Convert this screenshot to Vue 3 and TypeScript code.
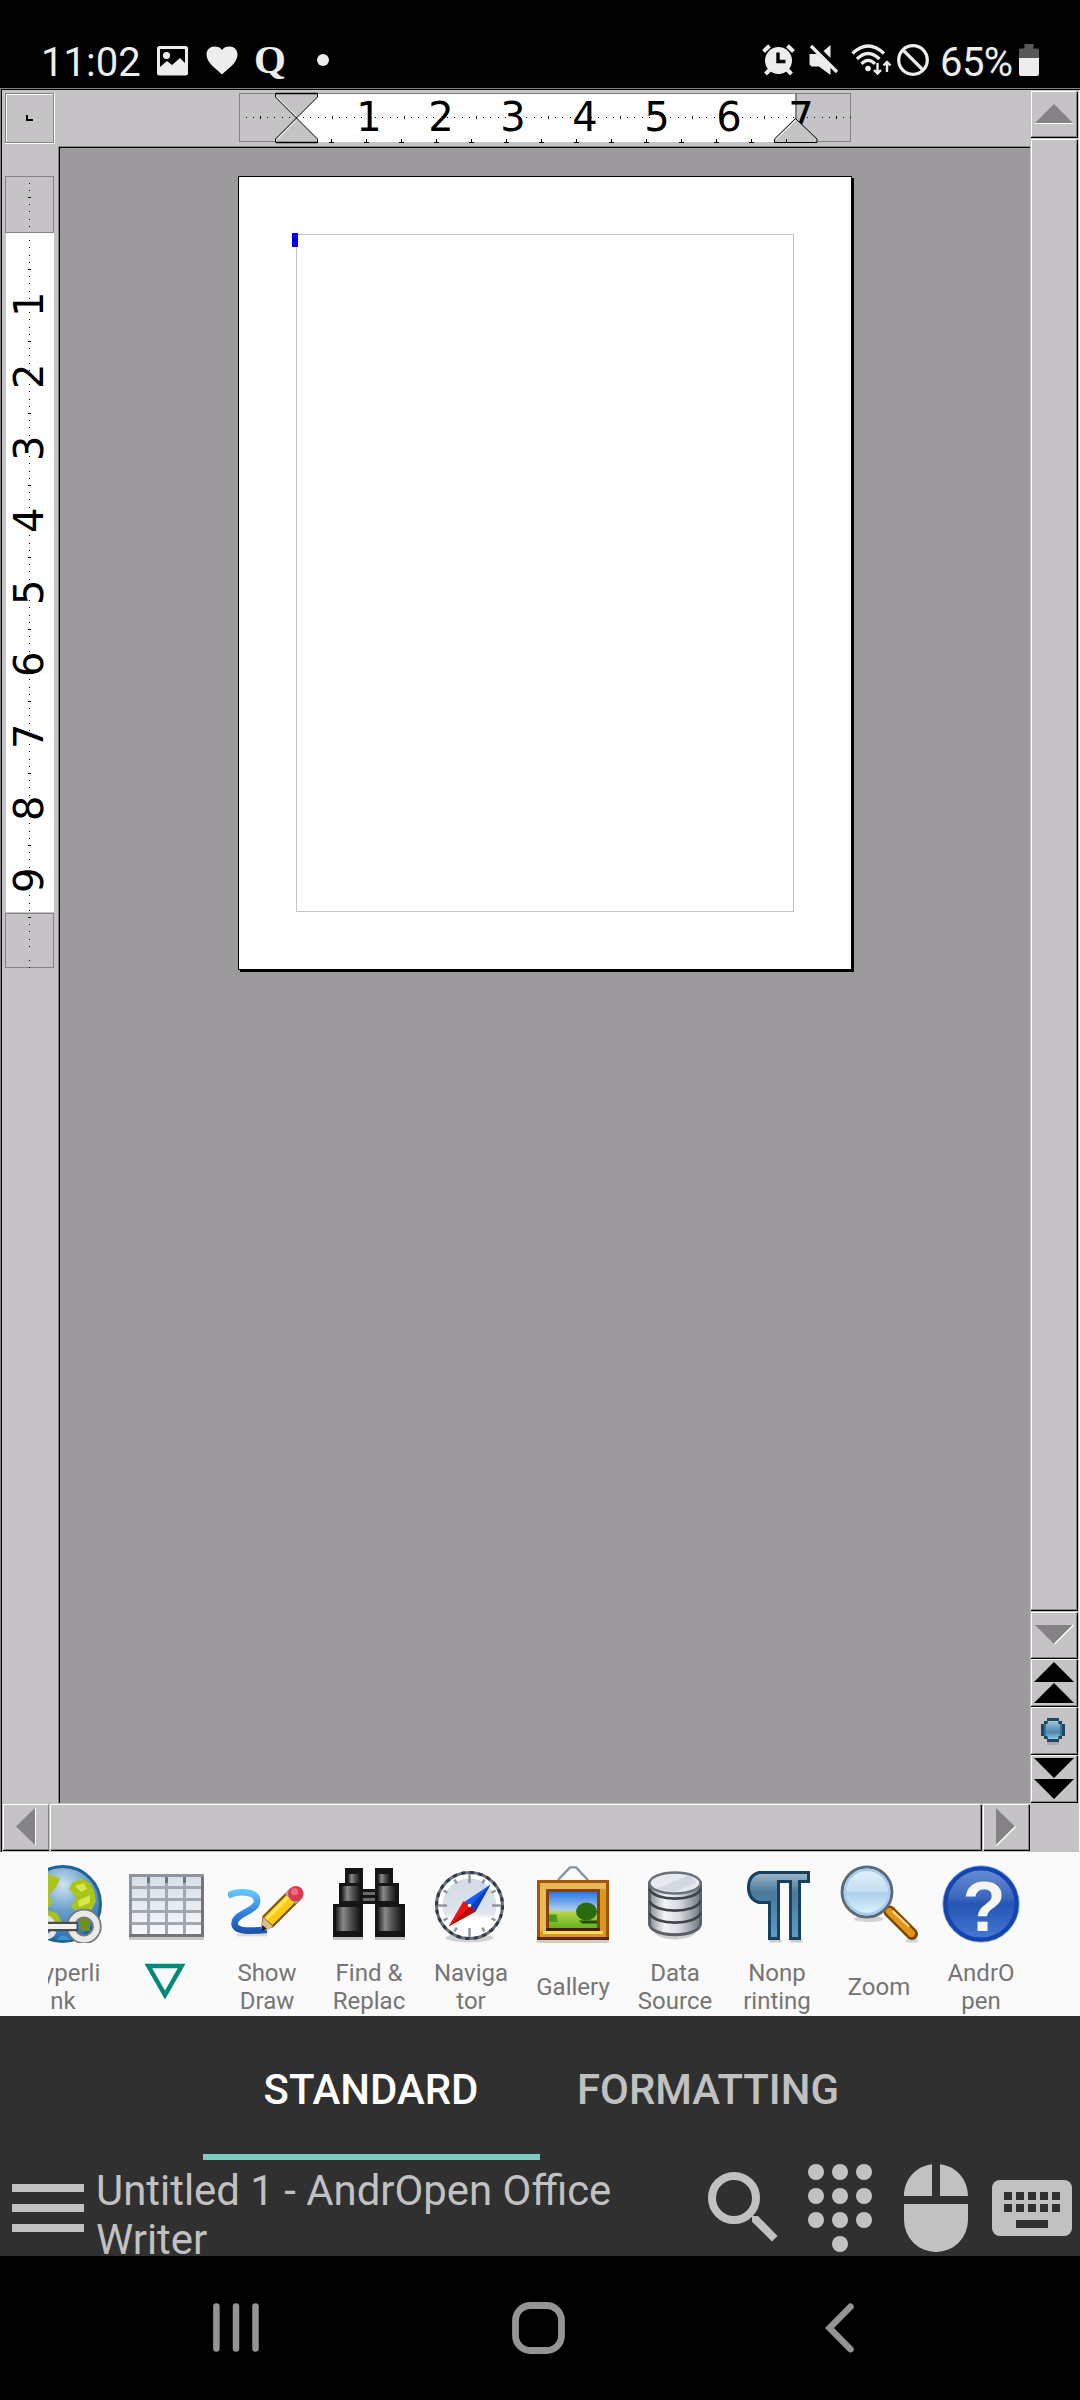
<script setup lang="ts">
interface Mark {
  pos: number
  major: boolean
}

const STEP = 7.2

// Ten divisions per inch: the half inch is a longer mark, the inch itself carries a number.
function marks(zero: number, from: number, to: number): Mark[] {
  const list: Mark[] = []
  for (let k = -7; k < 104; k++) {
    const pos = Math.round(zero + STEP * k)
    if (pos < from || pos > to || k % 10 === 0) continue
    list.push({ pos, major: Math.abs(k % 10) === 5 })
  }
  return list
}

const hMarks = marks(296, 245, 851)
const vMarks = marks(233, 180, 968)
const hNumbers = [1, 2, 3, 4, 5, 6, 7]
const vNumbers = [1, 2, 3, 4, 5, 6, 7, 8, 9]
const tabStops = Array.from({ length: 14 }, (_, i) => 331 + 35 * i)

interface Tool {
  id: string
  lines: string[]
}

const tools: Tool[] = [
  { id: 'link', lines: ['Hyperli', 'nk'] },
  { id: 'table', lines: [] },
  { id: 'draw', lines: ['Show', 'Draw'] },
  { id: 'find', lines: ['Find &', 'Replac'] },
  { id: 'navigator', lines: ['Naviga', 'tor'] },
  { id: 'gallery', lines: ['Gallery'] },
  { id: 'data', lines: ['Data', 'Source'] },
  { id: 'pilcrow', lines: ['Nonp', 'rinting'] },
  { id: 'zoom', lines: ['Zoom'] },
  { id: 'help', lines: ['AndrO', 'pen'] },
]

const compassTicks = Array.from({ length: 12 }, (_, i) => i * 30)
const keyCols = [12, 24, 36, 48, 60]
const padCols = [8, 32, 56]
</script>

<template>
  <div class="screen">
    <header class="status">
      <span class="clock">11:02</span>
      <svg class="s-image" width="31" height="30" viewBox="0 0 31 30">
        <path fill="#ededed" fill-rule="evenodd" d="M2.500 0H28.500A2.500 2.500 0 0 1 31 2.500V27A2.500 2.500 0 0 1 28.500 29.500H2.500A2.500 2.500 0 0 1 0 27V2.500A2.500 2.500 0 0 1 2.500 0ZM3 3V21L10 15L15 19L23 12L28 17V3Z" />
        <circle cx="9.500" cy="9.500" r="3.600" fill="#ededed" />
      </svg>
      <svg class="s-heart" width="32" height="29" viewBox="0 0 32 29">
        <path fill="#ededed" d="M16 28.500C10 22.500 0.500 17 0.500 8.500C0.500 3.500 4 0.500 8.500 0.500C12 0.500 14.500 1.500 16 4C17.500 1.500 20 0.500 23.500 0.500C28 0.500 31.500 3.500 31.500 8.500C31.500 17 22 22.500 16 28.500Z" />
      </svg>
      <span class="quora">Q</span>
      <i class="dot"></i>
      <div class="status-right">
        <svg width="33" height="32" viewBox="0 0 33 32">
          <path stroke="#ededed" stroke-width="4" d="M1.500 7.500L7.500 1.800M31.500 7.500L25.500 1.800M3.500 30L8 25.500M29.500 30L25 25.500" />
          <circle cx="16.500" cy="16.500" r="13.500" fill="#ededed" />
          <path fill="none" stroke="#000" stroke-width="3.400" d="M16 8.500V17.500H23.500" />
        </svg>
        <svg class="s-mute" width="30" height="32" viewBox="0 0 30 32">
          <path fill="#ededed" d="M0.500 10H8L21.500 22V31L10 22.500H2.500L0.500 20.500ZM21.500 1V14L14.500 7Z" />
          <path stroke="#ededed" stroke-width="3.400" d="M2 2L28 28" />
        </svg>
        <svg class="s-wifi" width="41" height="32" viewBox="0 0 41 32">
          <g fill="none" stroke="#ededed" stroke-width="3.200">
            <path d="M1.500 9.500Q17 -5.500 33 9.500" />
            <path d="M6 15Q17 4 28.500 15" />
            <path d="M10.500 19.800Q17 13 24 19.800" />
          </g>
          <circle cx="17" cy="24.500" r="2.800" fill="#ededed" />
          <path fill="none" stroke="#ededed" stroke-width="2.400" d="M26.500 19V29.500M23 26L26.500 29.500L30 26M36 28V18M32.500 21.500L36 18L39.500 21.500" />
        </svg>
        <svg class="s-ban" width="33" height="33" viewBox="0 0 33 33">
          <g fill="none" stroke="#ededed" stroke-width="3.200">
            <circle cx="16" cy="16" r="14.300" />
            <path d="M6 6L26 26" />
          </g>
        </svg>
        <span class="pct">65%</span>
        <svg width="20" height="32" viewBox="0 0 20 32">
          <path fill="#585858" d="M5.500 0H14.500V4.500H18.500Q20 4.500 20 6V14H0V6Q0 4.500 1.500 4.500H5.500Z" />
          <path fill="#ededed" d="M0 14H20V30Q20 32 18 32H2Q0 32 0 30Z" />
        </svg>
      </div>
    </header>

    <main class="editor">
      <div class="frame">
        <div class="work">
          <svg class="hruler" width="1028" height="56" viewBox="2 90 1028 56">
            <g shape-rendering="crispEdges">
              <path fill="none" stroke="#fff" d="M6.500 142V94.500H53M5 143.500H54.500V93" />
              <rect x="5.500" y="93.500" width="48" height="49" fill="none" stroke="#858285" />
              <path fill="#000" d="M26 115H28V119H33V121H26Z" />
              <rect x="239.500" y="93.500" width="611" height="48" fill="#c5c3c6" stroke="#858285" />
              <rect x="297" y="94" width="498" height="48" fill="#fff" />
              <rect x="795" y="93" width="2" height="49" fill="#858285" />
              <template v-for="m in hMarks" :key="m.pos">
                <rect :x="m.pos" :y="m.major ? 116 : 117" width="1" :height="m.major ? 3 : 1" />
              </template>
              <path v-for="t in tabStops" :key="t" :d="`M${t} 139H${t + 1}V142H${t + 3}V143H${t - 2}V142H${t}Z`" />
            </g>
            <text v-for="n in hNumbers" :key="n" :x="297 + 72 * n" y="131" text-anchor="middle" class="num">{{ n }}</text>
            <path d="M275.500 93.500H317.500V97L296.500 118L275.500 97ZM296.500 118L317.500 139V142.500H275.500V139Z" fill="#c5c3c6" stroke="#000" />
            <path d="M277 97L296 116M277 139.500L296 120.500" stroke="#fff" fill="none" />
            <path d="M276 142.500H317.500M276 93.500H317.500" stroke="#000" stroke-width="1.500" />
            <path d="M795.500 118.500L817 139V142.500H774.500V139Z" fill="#c5c3c6" stroke="#000" />
            <path d="M776 139.500L795.500 120.500" stroke="#fff" fill="none" />
            <path d="M775 142.500H817M786.500 139V142" stroke="#000" />
          </svg>

          <div class="middle">
            <svg class="vruler" width="56" height="1655" viewBox="2 148 56 1655">
              <g shape-rendering="crispEdges">
                <rect x="5.500" y="176.500" width="48" height="56" fill="none" stroke="#858285" />
                <rect x="6" y="233" width="48" height="679" fill="#fff" />
                <rect x="5.500" y="913.500" width="48" height="54" fill="none" stroke="#858285" />
                <template v-for="m in vMarks" :key="m.pos">
                  <rect :x="m.major ? 28 : 29" :y="m.pos" :width="m.major ? 3 : 1" height="1" />
                </template>
              </g>
              <text
                v-for="n in vNumbers"
                :key="n"
                :transform="`translate(43 ${232.300 + 72 * n}) rotate(-90)`"
                text-anchor="middle"
                class="num"
              >{{ n }}</text>
            </svg>
            <div class="canvas">
              <div class="page">
                <div class="margins"><i class="cursor"></i></div>
              </div>
            </div>
          </div>

          <div class="hscroll">
            <div class="hb left">
              <svg width="44" height="45" viewBox="0 0 44 45"><path fill="#858285" d="M31 3V40L12 21.500Z" /><path stroke="#fff" d="M31.500 3V40.500" /></svg>
            </div>
            <div class="hthumb"></div>
            <div class="hb right">
              <svg width="44" height="45" viewBox="0 0 44 45"><path fill="#858285" d="M12 3L31 21.500L12 40Z" /><path stroke="#fff" stroke-width="1.500" d="M31.500 21.500L12.500 40.500" /></svg>
            </div>
          </div>
        </div>

        <div class="vscroll">
          <div class="vb up">
            <svg width="44" height="44" viewBox="0 0 44 44"><path fill="#858285" d="M22 12L41 31H3Z" /><path stroke="#fff" d="M3 31.500H41" /></svg>
          </div>
          <div class="vthumb"></div>
          <div class="vb down">
            <svg width="44" height="44" viewBox="0 0 44 44"><path fill="#858285" d="M3 12H41L22 31Z" /><path stroke="#fff" stroke-width="1.500" d="M41.500 12L22.500 31" /></svg>
          </div>
          <div class="vb page-nav">
            <svg width="44" height="45" viewBox="0 0 44 45"><path d="M22 2L42 22H2ZM22 23L42 43H2Z" /></svg>
          </div>
          <div class="vb page-nav">
            <svg width="44" height="45" viewBox="1 0 44 45" shape-rendering="crispEdges">
              <defs>
                <linearGradient id="ball" x1="0" y1="0" x2="0" y2="1">
                  <stop offset="0" stop-color="#a9c6da" />
                  <stop offset="0.450" stop-color="#5f97b8" />
                  <stop offset="0.650" stop-color="#4c88ac" />
                  <stop offset="1" stop-color="#93c9e8" />
                </linearGradient>
              </defs>
              <path fill="#a9a8ab" d="M16 34H28V37H16Z" />
              <path fill="#1f4660" d="M16 10H28V13H31V16H34V28H31V31H28V34H16V31H13V28H10V16H13V13H16Z" />
              <path fill="#3f7191" d="M16 13H28V16H31V28H28V31H16V28H13V16H16Z" />
              <path fill="url(#ball)" d="M17 13H27V16H29V28H27V31H17V28H15V16H17Z" />
            </svg>
          </div>
          <div class="vb page-nav">
            <svg width="44" height="45" viewBox="0 0 44 45"><path d="M2 2H42L22 22ZM2 23H42L22 43Z" /></svg>
          </div>
        </div>
      </div>
    </main>

    <section class="toolbar">
      <div class="strip">
        <div v-for="t in tools" :key="t.id" class="tool">
          <svg v-if="t.id === 'link'" width="78" height="78" viewBox="0 0 26 26">
            <defs>
              <radialGradient id="sea" cx="0.500" cy="0.250" r="0.750">
                <stop offset="0" stop-color="#cfe2f0" />
                <stop offset="0.450" stop-color="#6a9fcb" />
                <stop offset="1" stop-color="#2a6ca8" />
              </radialGradient>
            </defs>
            <circle cx="13" cy="13" r="12.500" fill="url(#sea)" stroke="#1f6298" />
            <path fill="#a9c51c" d="M16 6L19 4.500L22 6L23.500 9L24 12L22.500 15H17L15.500 14L17.500 11L15 8ZM3 5L8 3L12 4.500L11 7L8.500 10L9.500 13L7 15L3 11ZM7 15L11 16L12.500 19L9 20L6 18Z" />
            <path fill="#dbe84a" d="M17 7L20 6L21 8L19 9ZM18 12L22 10V12.500L18.500 14Z" />
            <path fill="#6d8f1c" d="M18 17H22V22H19Z" />
            <circle cx="20" cy="20.500" r="4.300" fill="none" stroke="#77797a" stroke-width="3.200" />
            <circle cx="20" cy="20.500" r="4.300" fill="none" stroke="#e9e9e9" stroke-width="2" />
            <path d="M5 17.500Q8.500 17 9.500 19.500M5 24Q9 24.500 10 22" fill="none" stroke="#e6e6e6" stroke-width="1.800" />
            <path d="M6 20.500H18" stroke="#4a4c4c" stroke-width="3.200" />
            <path d="M6 20.500H17.500" stroke="#f1f1f1" stroke-width="1.700" />
            <path d="M11 25Q13 22 15.500 25Z" fill="#3c96d2" />
          </svg>
          <svg v-else-if="t.id === 'table'" width="78" height="78" viewBox="0 0 26 26" shape-rendering="crispEdges">
            <defs>
              <linearGradient id="sheet" x1="0" y1="0" x2="0" y2="1">
                <stop offset="0" stop-color="#d6dde5" />
                <stop offset="1" stop-color="#f8fafc" />
              </linearGradient>
            </defs>
            <rect x="1" y="24" width="25" height="1" fill="#c6c6c6" />
            <rect x="1" y="3" width="25" height="21" fill="url(#sheet)" />
            <path fill="#a0a8b0" d="M1 7H26V8H1ZM1 11H26V12H1ZM1 15H26V16H1ZM1 19H26V20H1ZM7 3H8V24H7ZM13 3H14V24H13ZM19 3H20V24H19Z" />
            <path fill="#8c959d" d="M1 3H26V4H1ZM1 3H2V24H1Z" />
            <path fill="#6e777e" d="M1 23H26V24H1ZM25 4H26V24H25ZM7 4H8V6H7ZM13 4H14V6H13ZM19 4H20V6H19Z" />
          </svg>
          <svg v-else-if="t.id === 'draw'" width="78" height="78" viewBox="0 0 26 26">
            <defs>
              <linearGradient id="ink" x1="0" y1="0" x2="0" y2="1">
                <stop offset="0" stop-color="#62c4fb" />
                <stop offset="0.500" stop-color="#2f86e2" />
                <stop offset="1" stop-color="#1b55b4" />
              </linearGradient>
            </defs>
            <path d="M3 23.300H13" stroke="#dcdcdc" />
            <path d="M0 10.200C3 8.500 9.700 8.500 9.700 12C9.700 15.500 2.200 16 2.200 19.500C2.200 22.500 8 22 13 21.600" fill="none" stroke="url(#ink)" stroke-width="2.200" />
            <path d="M11 21.800L11.500 17L20.300 8.200L24 11.800L15 20.800Z" fill="#7d5210" />
            <path d="M12 17.500L20 9.500L22.800 12L14.800 20Z" fill="#ffc914" />
            <path d="M12.800 18L20.500 10.300" stroke="#ffea62" stroke-width="1" />
            <path d="M11 21.500L11.800 17.500L15 20.500L13 21.800Z" fill="#d9bf8c" />
            <path d="M11 22L11.500 20L13 21.300Z" fill="#222" />
            <path d="M18.900 9.600L20.600 8L24.300 11.400L22.600 13Z" fill="#a4a6a8" />
            <circle cx="22.600" cy="9.600" r="2.600" fill="#d83a52" />
            <circle cx="22.200" cy="8.900" r="1.200" fill="#f06a80" />
          </svg>
          <svg v-else-if="t.id === 'find'" width="78" height="78" viewBox="0 0 26 26" shape-rendering="crispEdges">
            <defs>
              <linearGradient id="barrel">
                <stop offset="0" stop-color="#222" />
                <stop offset="0.300" stop-color="#8a8a8a" />
                <stop offset="0.600" stop-color="#505050" />
                <stop offset="1" stop-color="#161616" />
              </linearGradient>
            </defs>
            <path fill="#c4c4c4" d="M1 24H11V25H1ZM15 24H25V25H15Z" />
            <path fill="#151515" d="M5 1H11V8H15V1H21V6H23V13H25V24H15V13H11V24H1V13H3V6H5Z" />
            <path fill="#6a6a6a" d="M11 9H15V10H11ZM11 11H15V12H11Z" />
            <path fill="url(#barrel)" d="M6 3H10V6H6Z" />
            <path fill="url(#barrel)" d="M16 3H20V6H16Z" />
            <path fill="url(#barrel)" d="M4 7H10V12H4Z" />
            <path fill="url(#barrel)" d="M16 7H22V12H16Z" />
            <path fill="url(#barrel)" d="M2 14H10V22H2Z" />
            <path fill="url(#barrel)" d="M16 14H24V22H16Z" />
          </svg>
          <svg v-else-if="t.id === 'navigator'" width="78" height="78" viewBox="0 0 26 26">
            <defs>
              <linearGradient id="dial" x1="0" y1="0" x2="0" y2="1">
                <stop offset="0" stop-color="#d3dae3" />
                <stop offset="0.650" stop-color="#dfe5ec" />
                <stop offset="0.750" stop-color="#fff" />
              </linearGradient>
            </defs>
            <ellipse cx="12.500" cy="24.300" rx="8" ry="1.500" fill="#d2d2d2" />
            <circle cx="12.500" cy="13.500" r="11" fill="#fff" stroke="#66717c" />
            <circle cx="12.500" cy="13.500" r="11" fill="none" stroke="#2f3a46" stroke-dasharray="1.400 1.480" />
            <circle cx="12.500" cy="13.500" r="9" fill="url(#dial)" />
            <path
              v-for="a in compassTicks"
              :key="a"
              :transform="`rotate(${a} 12.500 13.500)`"
              :d="a % 90 === 0 ? 'M12.500 3V6' : 'M12.500 3.500V5'"
              stroke="#8a949e"
              stroke-width="0.800"
            />
            <path d="M19.500 6.500L10.500 12.500L14.500 15.500Z" fill="#1a5cf0" />
            <path d="M19.500 6.500L12.500 14L14.500 15.500Z" fill="#0b3fc0" />
            <path d="M5.500 20.500L10.500 12L14.500 15.500Z" fill="#ee1212" />
            <path d="M5.500 20.500L12.500 14L14.500 15.500Z" fill="#b80808" />
            <circle cx="12.500" cy="13.500" r="0.600" fill="#fff" />
          </svg>
          <svg v-else-if="t.id === 'gallery'" width="78" height="78" viewBox="0 0 26 26">
            <defs>
              <linearGradient id="sky" x1="0" y1="0" x2="0" y2="1">
                <stop offset="0" stop-color="#2a76e0" />
                <stop offset="0.500" stop-color="#a9cdf2" />
                <stop offset="0.560" stop-color="#b7d24c" />
                <stop offset="1" stop-color="#62b31a" />
              </linearGradient>
            </defs>
            <path d="M8 5L12 0.800H14L18 5" fill="none" stroke="#8494a2" stroke-width="0.800" />
            <g shape-rendering="crispEdges">
              <rect x="1" y="25" width="24" height="1" fill="#d0cdc8" />
              <rect x="1" y="5" width="24" height="20" fill="#a85408" />
              <rect x="1" y="24" width="24" height="1" fill="#662400" />
              <rect x="2" y="6" width="22" height="18" fill="#d99a1c" />
              <path fill="#e8b956" d="M2 6H24V8H4V22H2Z" />
              <path fill="#f4da72" d="M3 22H23V23H3Z" />
              <rect x="4" y="8" width="18" height="14" fill="#8a4204" />
              <rect x="4" y="21" width="18" height="1" fill="#4a1c00" />
              <rect x="5" y="9" width="16" height="12" fill="url(#sky)" />
            </g>
            <path d="M5 16.500H7.500L8 19H5Z" fill="#4a9a18" />
            <ellipse cx="17.500" cy="15.500" rx="3.500" ry="3" fill="#2a6a10" />
            <path d="M15 18.500H21V19.500H16Z" fill="#1d4f0a" />
          </svg>
          <svg v-else-if="t.id === 'data'" width="78" height="78" viewBox="0 0 26 26">
            <defs>
              <linearGradient id="disk">
                <stop offset="0" stop-color="#868e96" />
                <stop offset="0.300" stop-color="#f4f6f8" />
                <stop offset="0.600" stop-color="#d4d8dc" />
                <stop offset="1" stop-color="#70787f" />
              </linearGradient>
            </defs>
            <ellipse cx="13" cy="21.800" rx="7" ry="3" fill="#cfcfcf" />
            <path d="M4.500 6V19.500C4.500 24.500 21.500 24.500 21.500 19.500V6Z" fill="url(#disk)" stroke="#596067" />
            <path d="M4.500 8C6 12.300 20 12.300 21.500 8M4.500 12C6 16.300 20 16.300 21.500 12M4.500 16C6 20.300 20 20.300 21.500 16" fill="none" stroke="#3d444a" stroke-width="0.900" />
            <ellipse cx="13" cy="6" rx="8.500" ry="3.500" fill="#e6eaee" stroke="#6b737a" stroke-width="0.800" />
            <path d="M7 8L17 3.500Q20 4.500 20 6L13 9Z" fill="#d2d9e0" />
          </svg>
          <svg v-else-if="t.id === 'pilcrow'" width="78" height="78" viewBox="0 0 26 26">
            <defs>
              <linearGradient id="pil" x1="0" y1="0" x2="0" y2="1">
                <stop offset="0" stop-color="#a0b8cc" />
                <stop offset="0.300" stop-color="#4a7898" />
                <stop offset="1" stop-color="#5f9cc4" />
              </linearGradient>
            </defs>
            <path d="M10.500 25.300H14.500M17.500 25.300H21.500" stroke="#ccc" />
            <path d="M7 2.500H23.500V5.500H20.500V24.500H17.500V5.500H13.500V24.500H10.500V12.500H7Q3.500 11.500 3.500 7.500Q3.500 3.500 7 2.500Z" fill="url(#pil)" stroke="#16405f" />
          </svg>
          <svg v-else-if="t.id === 'zoom'" width="78" height="78" viewBox="0 0 26 26">
            <defs>
              <linearGradient id="lens" x1="0" y1="0" x2="0" y2="1">
                <stop offset="0" stop-color="#e6f2fb" />
                <stop offset="0.480" stop-color="#c6def2" />
                <stop offset="0.520" stop-color="#aed0ec" />
                <stop offset="1" stop-color="#e2f8fd" />
              </linearGradient>
            </defs>
            <ellipse cx="9.500" cy="18" rx="5" ry="1" fill="#d4d4d4" />
            <path d="M22 25.300H26" stroke="#d4d4d4" />
            <path d="M16.500 15.500L24 23" stroke="#7a4400" stroke-width="4" stroke-linecap="round" />
            <path d="M16.500 15.500L23.800 22.800" stroke="#e09418" stroke-width="2.400" stroke-linecap="round" />
            <path d="M17.500 15.300L23 20.500" stroke="#f9d48a" stroke-width="0.800" />
            <circle cx="9" cy="9" r="8.300" fill="url(#lens)" stroke="#5d6a74" />
            <circle cx="9" cy="9" r="7.400" fill="none" stroke="#a4cdf0" stroke-width="0.800" />
          </svg>
          <svg v-else width="78" height="78" viewBox="0 0 26 26">
            <defs>
              <linearGradient id="orb" x1="0" y1="0" x2="0" y2="1">
                <stop offset="0" stop-color="#6a8ed4" />
                <stop offset="0.420" stop-color="#3a66bc" />
                <stop offset="0.500" stop-color="#2555b4" />
                <stop offset="1" stop-color="#4478d4" />
              </linearGradient>
            </defs>
            <circle cx="13" cy="13" r="12.900" fill="#8cb4f0" />
            <circle cx="13" cy="13" r="11.900" fill="url(#orb)" stroke="#1444ae" stroke-width="1.400" />
            <text x="14" y="22" text-anchor="middle" class="qmark">?</text>
          </svg>

          <svg v-if="t.id === 'table'" class="dropdown" width="42" height="37" viewBox="0 0 42 37">
            <path d="M4.400 3H37.600L21 32Z" fill="none" stroke="#00897b" stroke-width="4.500" />
          </svg>
          <div v-else class="label">
            <span v-for="l in t.lines" :key="l">{{ l }}</span>
          </div>
        </div>
      </div>
    </section>

    <section class="dock">
      <nav class="tabs">
        <div class="tab active">STANDARD</div>
        <div class="tab">FORMATTING</div>
      </nav>
      <div class="titlebar">
        <div class="burger"><i></i><i></i><i></i></div>
        <div class="title">Untitled 1 - AndrOpen Office Writer</div>
        <svg class="t-search" width="72" height="96" viewBox="0 0 72 96">
          <circle cx="26" cy="38" r="22" fill="none" stroke="#c1c1c1" stroke-width="8" />
          <path fill="#c1c1c1" d="M44 56H50L69.500 76L64 81.500L44 61.700Z" />
        </svg>
        <svg class="t-pad" width="64" height="96" viewBox="0 0 64 96">
          <g fill="#c1c1c1">
            <template v-for="x in padCols" :key="x">
              <circle :cx="x" cy="12" r="8" />
              <circle :cx="x" cy="36" r="8" />
              <circle :cx="x" cy="60" r="8" />
            </template>
            <circle cx="32" cy="84" r="8" />
          </g>
        </svg>
        <svg class="t-mouse" width="64" height="96" viewBox="0 0 64 96">
          <path fill="#c1c1c1" d="M28 4.300V36H0C0 19.500 12 6 28 4.300ZM36 4.300V36H64C64 19.500 52 6 36 4.300ZM0 44H64V60A32 32 0 0 1 0 60Z" />
        </svg>
        <svg class="t-keys" width="80" height="96" viewBox="0 0 80 96">
          <rect y="20" width="80" height="56" rx="8" fill="#c1c1c1" />
          <template v-for="x in keyCols" :key="x">
            <rect :x="x" y="32" width="8" height="8" fill="#303030" />
            <rect :x="x" y="44" width="8" height="8" fill="#303030" />
          </template>
          <rect x="24" y="60" width="32" height="8" fill="#303030" />
        </svg>
      </div>
    </section>

    <footer class="nav">
      <svg width="46" height="52" viewBox="0 0 46 52">
        <path stroke="#949494" stroke-width="6.500" stroke-linecap="round" d="M3.400 4.600V46.400M23 4.600V46.400M42.500 4.600V46.400" />
      </svg>
      <svg class="n-home" width="53" height="52" viewBox="0 0 53 52">
        <rect x="3.500" y="3.500" width="46" height="45" rx="15" fill="none" stroke="#949494" stroke-width="6.800" />
      </svg>
      <svg class="n-back" width="29" height="52" viewBox="0 0 29 52">
        <path fill="none" stroke="#949494" stroke-width="6.500" stroke-linecap="round" d="M25.500 4.800L4.500 26L25.500 47.200" />
      </svg>
    </footer>
  </div>
</template>

<style>
body {
  margin: 0;
  background: #000;
}
</style>

<style scoped>
.screen {
  width: 1080px;
  height: 2400px;
  display: flex;
  flex-direction: column;
  background: #000;
  overflow: hidden;
  font-family: Roboto, sans-serif;
}
svg {
  display: block;
  flex: none;
}

/* status bar */
.status {
  height: 88px;
  flex: none;
  box-sizing: border-box;
  padding: 44px 41px 0 41px;
  display: flex;
  align-items: flex-start;
  color: #ededed;
}
.clock,
.pct {
  font-size: 40px;
  line-height: 40px;
  margin-top: -1px;
}
.clock {
  width: 116px;
}
.s-image {
  margin-top: 2px;
}
.s-heart {
  margin: 2px 0 0 18px;
}
.quora {
  width: 33px;
  margin: -5px 0 0 16px;
  font: bold 41px/40px 'Liberation Serif', serif;
}
.dot {
  width: 12px;
  height: 12px;
  border-radius: 50%;
  background: #ededed;
  margin: 10px 0 0 30px;
}
.status-right {
  margin-left: auto;
  display: flex;
}
.s-mute {
  margin-left: 14px;
}
.s-wifi {
  margin-left: 12px;
}
.s-ban {
  margin-left: 5px;
}
.pct {
  width: 79px;
  margin-left: 10px;
  letter-spacing: -0.6px;
}

/* editor */
.editor {
  height: 1764px;
  flex: none;
  box-sizing: border-box;
  border-top: 1px solid #858285;
  border-left: 1px solid #858285;
  background: #c5c3c6;
}
.frame {
  height: 1763px;
  box-sizing: border-box;
  border-top: 1px solid #000;
  border-left: 1px solid #000;
  display: flex;
}
.work {
  width: 1028px;
  flex: none;
  display: flex;
  flex-direction: column;
}
.hruler {
  height: 56px;
}
.middle {
  height: 1657px;
  box-sizing: border-box;
  display: flex;
}
.vruler {
  padding-top: 2px;
}
.canvas {
  flex: 1;
  box-sizing: border-box;
  background: #9c9a9c;
  border-left: 1px solid #858285;
  border-top: 1px solid #858285;
  box-shadow: inset 1px 1px 0 #000;
  padding: 29px 0 0 179px;
}
.page {
  width: 614px;
  height: 794px;
  box-sizing: border-box;
  background: #fff;
  border: 1px solid #000;
  box-shadow: 2px 2px 0 #000;
  padding: 57px;
}
.margins {
  width: 498px;
  height: 678px;
  box-sizing: border-box;
  border: 1px solid #c4c4c4;
}
.cursor {
  display: block;
  width: 6px;
  height: 14px;
  background: #0000f0;
  position: relative;
  left: -5px;
  top: -2px;
}
.num {
  font-family: 'DejaVu Sans', sans-serif;
  font-size: 40px;
}

.hscroll {
  height: 49px;
  display: flex;
}
.hb,
.hthumb {
  box-sizing: border-box;
  margin-top: 1px;
  height: 46px;
  border-top: 1px solid #fff;
  border-left: 1px solid #fff;
  border-right: 1px solid #858285;
  border-bottom: 1px solid #858285;
  box-shadow: 0 1px 0 #000;
}
.hb.left {
  width: 46px;
  margin-left: 1px;
}
.hthumb {
  width: 931px;
  margin-left: 1px;
  box-shadow: 1px 1px 0 #000;
}
.hb.right {
  width: 46px;
  margin-left: 2px;
  box-shadow: 1px 1px 0 #000;
}

.vscroll {
  width: 50px;
  flex: none;
  box-sizing: border-box;
  height: 1762px;
  border-right: 1px solid #fafafa;
}
.vb,
.vthumb {
  box-sizing: border-box;
  width: 46px;
  margin: 1px 0 1px 1px;
  border-top: 1px solid #fff;
  border-left: 1px solid #fff;
  border-right: 1px solid #858285;
  border-bottom: 1px solid #858285;
  box-shadow:
    1px 1px 0 #000,
    0 1px 0 #000;
}
.vb {
  height: 46px;
}
.vb.down {
  margin-top: 2px;
}
.vb.page-nav {
  height: 47px;
}
.vthumb {
  height: 1471px;
  margin-top: 2px;
}

/* toolbar */
.toolbar {
  height: 164px;
  flex: none;
  background: #fafafa;
  padding-left: 48px;
  display: flex;
}
.strip {
  flex: 1;
  overflow: hidden;
  display: flex;
}
.tool {
  width: 102px;
  flex: none;
  padding-top: 13px;
  display: flex;
  flex-direction: column;
  align-items: center;
}
.tool:first-child {
  margin-left: -36px;
}
.label {
  height: 56px;
  margin-top: 16px;
  display: flex;
  flex-direction: column;
  align-items: center;
  justify-content: center;
  font-size: 24px;
  line-height: 28px;
  color: #757575;
  white-space: nowrap;
}
.dropdown {
  margin-top: 20px;
}
.qmark {
  font: bold 23.500px 'Liberation Sans', sans-serif;
  fill: #f6f6f6;
}

/* dark dock */
.dock {
  height: 240px;
  flex: none;
  background: #303030;
}
.tabs {
  height: 144px;
  padding-left: 203px;
  display: flex;
}
.tab {
  width: 337px;
  height: 144px;
  box-sizing: border-box;
  padding: 5px 1px 0 0;
  border-bottom: 6px solid transparent;
  text-align: center;
  font-size: 41.900px;
  font-weight: 500;
  line-height: 138px;
  color: #c1c1c1;
}
.tab.active {
  color: #fff;
  border-bottom-color: #80cbc4;
}
.titlebar {
  height: 96px;
  overflow: hidden;
  display: flex;
  align-items: flex-start;
}
.burger {
  width: 72px;
  margin: 24px 0 0 12px;
  display: flex;
  flex-direction: column;
  gap: 12px;
}
.burger i {
  height: 8px;
  background: #c1c1c1;
}
.title {
  width: 540px;
  margin: 6px 0 0 12px;
  font-size: 41.900px;
  line-height: 49px;
  color: #c1c1c1;
}
.t-search {
  margin-left: 72px;
}
.t-pad {
  margin-left: 28px;
}
.t-mouse {
  margin-left: 32px;
}
.t-keys {
  margin-left: 24px;
}

/* system navigation */
.nav {
  height: 144px;
  flex: none;
  box-sizing: border-box;
  padding: 46px 0 0 213px;
  display: flex;
  align-items: flex-start;
}
.n-home {
  margin-left: 253px;
}
.n-back {
  margin-left: 260px;
}
</style>
